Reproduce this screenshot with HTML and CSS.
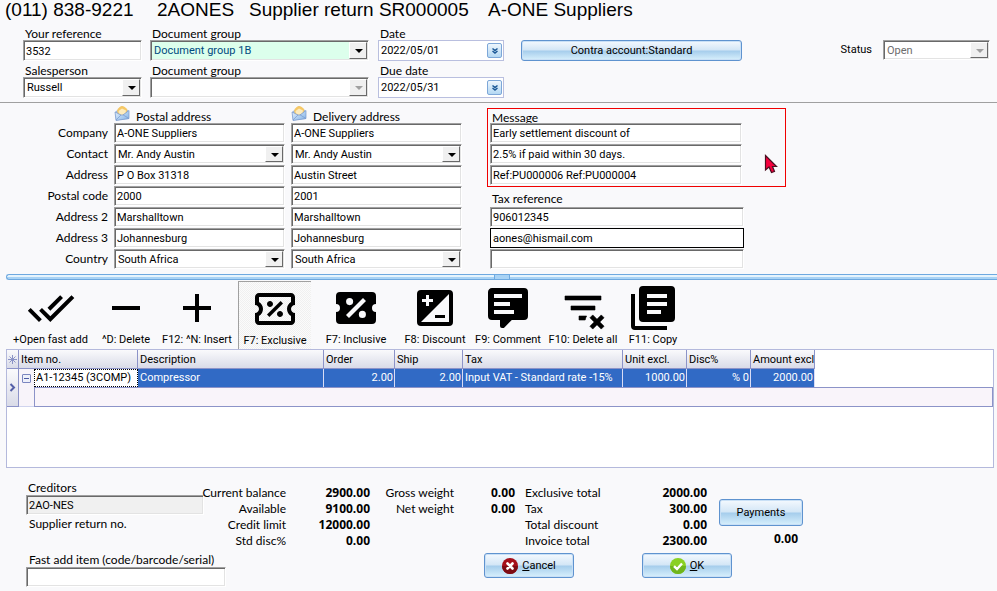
FILE: index.html
```html
<!DOCTYPE html>
<html lang="en">
<head>
<meta charset="utf-8">
<title>Supplier return SR000005</title>
<link rel="stylesheet" href="styles.css">
</head>
<body>
<svg class="defs" aria-hidden="true">
  <defs>
    <linearGradient id="env" x1="0" y1="0" x2="1" y2="1"><stop offset="0" stop-color="#eaf4fd"/><stop offset="1" stop-color="#7fb0e6"/></linearGradient>
    <symbol id="envelope" viewBox="0 0 16 16">
      <path d="M1 7L8 1L15 6V14L2 15.500Z" fill="#9db9e0"/>
      <path d="M3 5.500C5 2 6.500 1 8 1S12 2.500 13.500 5L12 8L8 10L4 9Z" fill="#f6c866"/>
      <path d="M4.500 6L8 3.500L12 5.500L11.500 8L8 10L5 8.500Z" fill="#fdebbd"/>
      <path d="M1 7L7 10L9 10L15 5.500V13.500L2 15.500Z" fill="url(#env)" stroke="#7898cc" stroke-width=".7"/>
      <path d="M2 15L7 10M15 13.500L9 9.800" stroke="#7898cc" stroke-width=".7" fill="none"/>
    </symbol>
  </defs>
</svg>

<header class="title">
  <span class="phone">(011) 838-9221</span>
  <span class="code">2AONES</span>
  <span class="doc">Supplier return SR000005</span>
  <span>A-ONE Suppliers</span>
</header>

<section class="head-form">
  <div class="col col-ref">
    <div class="group"><label for="ref">Your reference</label><input class="field" id="ref" type="text" value="3532"></div>
    <div class="group"><label for="sales">Salesperson</label><span class="combo"><select class="field" id="sales"><option>Russell</option></select></span></div>
  </div>
  <div class="col col-group">
    <div class="group"><label for="dg1">Document group</label><span class="combo"><select class="field mint" id="dg1"><option>Document group 1B</option></select></span></div>
    <div class="group"><label for="dg2">Document group</label><span class="combo off"><select class="field" id="dg2"><option></option></select></span></div>
  </div>
  <div class="col col-date">
    <div class="group"><label for="date">Date</label><span class="date"><input id="date" type="text" value="2022/05/01"><button type="button" aria-label="Choose date"><svg viewBox="0 0 8 8"><path d="M1.500 1.500L4 3.500L6.500 1.500M1.500 4L4 6L6.500 4" /></svg></button></span></div>
    <div class="group"><label for="due">Due date</label><span class="date"><input id="due" type="text" value="2022/05/31"><button type="button" aria-label="Choose due date"><svg viewBox="0 0 8 8"><path d="M1.500 1.500L4 3.500L6.500 1.500M1.500 4L4 6L6.500 4" /></svg></button></span></div>
  </div>
  <button class="btn contra" type="button">Contra account:Standard</button>
  <div class="status"><label for="status">Status</label><span class="combo off"><select class="field" id="status" disabled><option>Open</option></select></span></div>
</section>

<section class="addresses">
  <div class="stack names">
    <label for="p1">Company</label><label for="p2">Contact</label><label for="p3">Address</label><label for="p4">Postal code</label><label for="p5">Address 2</label><label for="p6">Address 3</label><label for="p7">Country</label>
  </div>
  <div class="stack address">
    <h2><svg><use href="#envelope"/></svg>Postal address</h2>
    <input class="field" id="p1" type="text" value="A-ONE Suppliers">
    <span class="combo"><select class="field" id="p2"><option>Mr. Andy Austin</option></select></span>
    <input class="field" id="p3" type="text" value="P O Box 31318">
    <input class="field" id="p4" type="text" value="2000">
    <input class="field" id="p5" type="text" value="Marshalltown">
    <input class="field" id="p6" type="text" value="Johannesburg">
    <span class="combo"><select class="field" id="p7"><option>South Africa</option></select></span>
  </div>
  <div class="stack address">
    <h2><svg><use href="#envelope"/></svg>Delivery address</h2>
    <input class="field" aria-label="Delivery company" type="text" value="A-ONE Suppliers">
    <span class="combo"><select class="field" aria-label="Delivery contact"><option>Mr. Andy Austin</option></select></span>
    <input class="field" aria-label="Delivery address" type="text" value="Austin Street">
    <input class="field" aria-label="Delivery postal code" type="text" value="2001">
    <input class="field" aria-label="Delivery address 2" type="text" value="Marshalltown">
    <input class="field" aria-label="Delivery address 3" type="text" value="Johannesburg">
    <span class="combo"><select class="field" aria-label="Delivery country"><option>South Africa</option></select></span>
  </div>
  <div class="notes">
    <div class="message">
      <label for="m1">Message</label>
      <div class="stack">
        <input class="field" id="m1" type="text" value="Early settlement discount of">
        <input class="field" aria-label="Message line 2" type="text" value="2.5% if paid within 30 days.">
        <input class="field" aria-label="Message line 3" type="text" value="Ref:PU000006 Ref:PU000004">
      </div>
      <svg class="pointer" viewBox="0 0 14 20"><path d="M1.500 1.500V16L5 13L7.500 18.500L10.500 17.500L8.500 12.500H12.500Z" fill="#f5003d" stroke="#4a1020" stroke-width="1.200"/></svg>
    </div>
    <div class="tax">
      <label for="t1">Tax reference</label>
      <div class="stack">
        <input class="field" id="t1" type="text" value="906012345">
        <input class="field focus" aria-label="Email" type="text" value="aones@hismail.com">
        <input class="field" aria-label="Extra reference" type="text">
      </div>
    </div>
  </div>
</section>

<div class="splitter"><span></span></div>

<nav class="toolbar">
  <button type="button"><svg viewBox="0 0 24 24"><path d="M18 7l-1.410-1.410-6.340 6.340 1.410 1.410L18 7zm4.240-1.410L11.660 16.170 7.480 12l-1.410 1.410L11.660 19l12-12-1.420-1.410zM.41 13.410L6 19l1.410-1.410L1.830 12 .41 13.410z"/></svg>+Open fast add</button>
  <button type="button"><svg viewBox="0 0 24 24"><path d="M5 11h14v2H5z"/></svg>^D: Delete</button>
  <button type="button"><svg viewBox="0 0 24 24"><path d="M5 11h6V5h2v6h6v2h-6v6h-2v-6H5z"/></svg>F12: ^N: Insert</button>
  <button type="button" class="pressed"><svg viewBox="0 0 24 24"><path d="M14.800 8L16 9.200L9.200 16L8 14.800L14.800 8M4 4H20C21.110 4 22 4.890 22 6V10C20.900 10 20 10.900 20 12C20 13.100 20.900 14 22 14V18C22 19.110 21.110 20 20 20H4C2.900 20 2 19.110 2 18V14C3.100 14 4 13.100 4 12C4 10.900 3.100 10 2 10V6C2 4.900 2.900 4 4 4M4 6V8.540C5.240 9.260 6 10.570 6 12C6 13.430 5.240 14.750 4 15.460V18H20V15.460C18.760 14.740 18 13.430 18 12C18 10.570 18.760 9.250 20 8.540V6H4M9.500 8C10.330 8 11 8.670 11 9.500S10.330 11 9.500 11 8 10.330 8 9.500 8.670 8 9.500 8M14.500 13C15.330 13 16 13.670 16 14.500S15.330 16 14.500 16 13 15.330 13 14.500 13.670 13 14.500 13Z"/></svg>F7: Exclusive</button>
  <button type="button"><svg viewBox="0 0 24 24"><path d="M4 4A2 2 0 0 0 2 6V10A2 2 0 0 1 4 12A2 2 0 0 1 2 14V18A2 2 0 0 0 4 20H20A2 2 0 0 0 22 18V14A2 2 0 0 1 20 12A2 2 0 0 1 22 10V6A2 2 0 0 0 20 4H4M15.500 7L17 8.500L8.500 17L7 15.500L15.500 7M8.810 7.040A1.770 1.770 0 0 1 8.810 10.580A1.770 1.770 0 0 1 8.810 7.040M15.190 13.420A1.770 1.770 0 0 1 15.190 16.960A1.770 1.770 0 0 1 15.190 13.420Z"/></svg>F7: Inclusive</button>
  <button type="button"><svg viewBox="0 0 24 24"><path d="M5 3H19A2 2 0 0 1 21 5V19A2 2 0 0 1 19 21H5A2 2 0 0 1 3 19V5A2 2 0 0 1 5 3M19 5L5 19H19V5M5.500 7.500V9H7.500V11H9V9H11V7.500H9V5.500H7.500V7.500H5.500M12 15.500H17V17H12V15.500Z"/></svg>F8: Discount</button>
  <button type="button"><svg viewBox="0 0 24 24"><path d="M9 22A1 1 0 0 1 8 21V18H4A2 2 0 0 1 2 16V4C2 2.890 2.900 2 4 2H20A2 2 0 0 1 22 4V16A2 2 0 0 1 20 18H13.900L10.200 21.710C10 21.900 9.750 22 9.500 22H9M5 5V7H19V5H5M5 9V11H13V9H5M5 13V15H15V13H5Z"/></svg>F9: Comment</button>
  <button type="button"><svg viewBox="0 0 24 24"><path d="M21 8H3V6H21V8M13.810 16H10V18H13.090C13.210 17.280 13.460 16.610 13.810 16M18 11H6V13H18V11M21.120 15.460L19 17.590L16.880 15.460L15.470 16.880L17.590 19L15.470 21.120L16.880 22.540L19 20.410L21.120 22.540L22.540 21.120L20.410 19L22.540 16.880L21.120 15.460Z" stroke="#000" stroke-width=".3"/></svg>F10: Delete all</button>
  <button type="button"><svg viewBox="0 0 24 24"><path d="M7 1H21A2 2 0 0 1 23 3V17A2 2 0 0 1 21 19H7A2 2 0 0 1 5 17V3A2 2 0 0 1 7 1M9 5V7H19V5H9M9 9V11H19V9H9M9 13V15H16V13H9M1 5H3V21H19V23H3A2 2 0 0 1 1 21V5Z"/></svg>F11: Copy</button>
</nav>

<main class="grid">
  <table>
    <colgroup><col class="c-ind"><col class="c-exp"><col class="c-item"><col class="c-desc"><col class="c-order"><col class="c-ship"><col class="c-tax"><col class="c-unit"><col class="c-disc"><col class="c-amt"><col></colgroup>
    <thead>
      <tr><th class="ind"><svg viewBox="0 0 9 9"><path d="M4.500 0V9M0 4.500H9M1.500 1.500L7.500 7.500M7.500 1.500L1.500 7.500"/></svg></th><th colspan="2">Item no.</th><th>Description</th><th>Order</th><th>Ship</th><th>Tax</th><th>Unit excl.</th><th>Disc%</th><th>Amount excl</th><td class="rest"></td></tr>
    </thead>
    <tbody>
      <tr class="selected"><th class="ind now" rowspan="2"><svg viewBox="0 0 9 9"><path d="M2.500 1L6 4.500L2.500 8"/></svg></th><td class="exp"><button type="button" aria-label="Collapse row"></button></td><td class="item">A1-12345 (3COMP)</td><td>Compressor</td><td class="num">2.00</td><td class="num">2.00</td><td>Input VAT - Standard rate -15%</td><td class="num">1000.00</td><td class="num">% 0</td><td class="num">2000.00</td><td class="rest"></td></tr>
      <tr class="detail"><td class="exp"></td><td class="sub" colspan="9"></td></tr>
    </tbody>
  </table>
</main>

<footer>
  <div class="summary">
    <div class="creditor">
      <label for="cred">Creditors</label>
      <input class="field gray" id="cred" type="text" value="2AO-NES" readonly>
      <span class="return-no">Supplier return no.</span>
    </div>
    <dl class="balances"><dt>Current balance</dt><dd>2900.00</dd><dt>Available</dt><dd>9100.00</dd><dt>Credit limit</dt><dd>12000.00</dd><dt>Std disc%</dt><dd>0.00</dd></dl>
    <dl class="weights"><dt>Gross weight</dt><dd>0.00</dd><dt>Net weight</dt><dd>0.00</dd></dl>
    <dl class="totals"><dt>Exclusive total</dt><dd>2000.00</dd><dt>Tax</dt><dd>300.00</dd><dt>Total discount</dt><dd>0.00</dd><dt>Invoice total</dt><dd>2300.00</dd></dl>
    <div class="pay"><button class="btn" type="button">Payments</button><b>0.00</b></div>
  </div>
  <div class="actions">
    <div class="fast"><label for="fast">Fast add item (code/barcode/serial)</label><input class="field" id="fast" type="text"></div>
    <button class="btn" type="button"><svg viewBox="0 0 16 16"><circle cx="8" cy="8" r="8" fill="#a5101b"/><path d="M0 8a8 8 0 0 0 16 0Z" fill="#7d0c14"/><path d="M5.500 5.500L10.500 10.500M10.500 5.500L5.500 10.500" stroke="#fff" stroke-width="2.600" stroke-linecap="round"/></svg><span><u>C</u>ancel</span></button>
    <button class="btn" type="button"><svg viewBox="0 0 16 16"><circle cx="8" cy="8" r="8" fill="#8ad023"/><path d="M0 8a8 8 0 0 0 16 0Z" fill="#6fb51c"/><path d="M4 8.200L7 11L12 5.500" fill="none" stroke="#fff" stroke-width="2.400"/></svg><span><u>O</u>K</span></button>
  </div>
</footer>
</body>
</html>
```

FILE: styles.css
```css
* { box-sizing: border-box; }

body {
  margin: 0;
  background: #f9f9fb;
  color: #000;
  font: 12px/14px Lato, "Open Sans", sans-serif;
}

input, select, button { margin: 0; font: 11px/14px Roboto, "Liberation Sans", sans-serif; color: #000; }
label { display: block; white-space: nowrap; }
.defs { position: absolute; width: 0; height: 0; }

.title {
  display: flex;
  height: 26px;
  padding: 0 5px;
  font: 19px/20px "Liberation Sans", sans-serif;
  white-space: nowrap;
}
.phone { width: 152px; }
.code { width: 92px; }
.doc { width: 239px; }

/* Sunken fields and drop-downs */
.field {
  display: block;
  width: 100%;
  height: 20px;
  padding: 1px 2px 0;
  border: 1px solid;
  border-color: #a0a0a0 #fff #fff #a0a0a0;
  border-radius: 0;
  background: #fff;
  box-shadow: inset 1px 1px #696969, inset -1px -1px #e3e3e3;
  outline: 0;
}
select.field { appearance: none; padding-left: 3px; opacity: 1; }
select:disabled { color: #6d6d6d; }
.mint { background: #dcffec; color: #004a80; }
.gray { background: #f0f0f0; }
.focus { border: 1px solid #000; box-shadow: none; }

.combo { position: relative; display: block; }
.combo::before {
  content: "";
  position: absolute;
  top: 2px;
  right: 2px;
  bottom: 2px;
  width: 16px;
  border: 1px solid;
  border-color: #fff #696969 #696969 #fff;
  background: #f0f0f0;
  pointer-events: none;
}
.combo::after {
  content: "";
  position: absolute;
  top: 9px;
  right: 6px;
  border: 4px solid transparent;
  border-top-color: #000;
  border-bottom: 0;
  pointer-events: none;
}
.combo.off::after { border-top-color: #a0a0a0; }

.btn {
  display: flex;
  align-items: center;
  justify-content: center;
  gap: 4px;
  padding: 0;
  border: 1px solid #5f93cf;
  border-radius: 3px;
  background: linear-gradient(#f4f9fe, #d3e6f6 48%, #a5cdec 52%, #d8f0fc);
  box-shadow: inset 0 0 0 1px #c9e0f6;
}
.btn svg { width: 16px; height: 16px; }

/* Document header */
.head-form {
  display: flex;
  padding: 0 7px 4px 23px;
  border-bottom: 1px solid #a0a0a0;
}
.col { display: flex; flex-direction: column; gap: 2px; }
.col .field { height: 21px; }
.col label { height: 14px; padding-left: 2px; line-height: 16px; }
.col-ref { width: 119px; margin-right: 8px; }
.col-group { width: 219px; margin-right: 9px; }
.col-date { width: 126px; margin-right: 17px; }
.date {
  display: flex;
  align-items: center;
  height: 21px;
  padding: 0 1px 0 2px;
  border: 1px solid #b9bfdf;
  background: #fff;
}
.date input { flex: 1; min-width: 0; padding: 0; border: 0; background: none; outline: 0; }
.date button {
  display: grid;
  place-items: center;
  width: 15px;
  height: 15px;
  padding: 0;
  border: 1px solid #7da7d8;
  border-radius: 2px;
  background: linear-gradient(#eef6fd, #b4d8f3);
}
.date svg { width: 8px; height: 8px; fill: none; stroke: #1c5896; stroke-width: 1.5; }
.contra { width: 221px; height: 21px; margin-top: 14px; }
.status { display: flex; align-items: center; gap: 11px; height: 20px; margin: 14px 0 0 auto; font: 11px/14px Roboto, sans-serif; }
.status .combo { width: 107px; }

/* Addresses and notes */
.addresses { display: flex; align-items: flex-end; height: 166px; }
.stack { display: grid; grid-auto-rows: 20px; row-gap: 1px; }
.names { width: 108px; margin-right: 6px; text-align: right; }
.names label { line-height: 20px; }
.address { width: 171px; margin-right: 6px; }
.address h2 { display: flex; align-items: flex-end; gap: 6px; height: 20px; margin: 0 0 -1px; font: inherit; line-height: 10px; }
.address h2 svg { width: 16px; height: 16px; margin-bottom: 1px; }
.notes { width: 299px; margin-left: 19px; }
.message { position: relative; padding: 0 43px 1px 2px; border: 1px solid #f00000; }
.message label, .tax label { padding-left: 2px; }
.message label { height: 14px; line-height: 18px; }
.message .stack { position: relative; }
.tax { padding: 5px 42px 0 3px; }
.tax label { height: 15px; }
.pointer { position: absolute; top: 45px; right: 7px; width: 14px; height: 20px; }

.splitter {
  display: flex;
  justify-content: center;
  height: 6px;
  margin: 5px 0 1px 6px;
  border: 1px solid #6ea9e0;
  border-right: 0;
  border-radius: 3px 0 0 3px;
  background: linear-gradient(#e6f4fd 50%, #a9d3f5 50%);
}
.splitter span { width: 16px; border: solid #6ea9e0; border-width: 0 1px; background: #a9d3f5; }

.toolbar {
  display: grid;
  grid-template-columns: 79px 72px 70px 85px 78px 80px 66px 84px 56px;
  justify-items: center;
  height: 68px;
  padding-left: 11px;
}
.toolbar button {
  display: flex;
  flex-direction: column;
  align-items: center;
  width: 100%;
  padding: 3px 0 0;
  border: 0;
  background: none;
  white-space: nowrap;
}
.toolbar svg { width: 48px; height: 48px; flex: none; margin-bottom: 1px; fill-rule: evenodd; }
.toolbar .pressed {
  width: 73px;
  border: solid #a0a0a0;
  border-width: 1px 0 0 1px;
  background: repeating-conic-gradient(#f0f0f0 0 25%, #fbfbfb 0 50%) 0 0 / 2px 2px;
}

/* Line items */
.grid { min-height: 119px; margin: 0 3px 0 6px; border: 1px solid #b4b9dc; background: #fff; }
table { width: 100%; table-layout: fixed; border-collapse: separate; border-spacing: 0; font: 11px/14px Roboto, sans-serif; }
.c-ind { width: 12px; }
.c-exp { width: 15px; }
.c-item { width: 104px; }
.c-desc { width: 186px; }
.c-order { width: 71px; }
.c-ship { width: 68px; }
.c-tax { width: 160px; }
.c-unit { width: 64px; }
.c-disc { width: 64px; }
.c-amt { width: 64px; }
th, td { height: 18px; padding: 0 2px; text-align: left; font-weight: 400; white-space: nowrap; overflow: hidden; }
th { height: 19px; border: solid #8c93c8; border-width: 0 1px 1px 0; background: linear-gradient(#fafafc, #d9dbe8); }
thead th { padding: 1px 1px 0 2px; }
thead .ind, .ind { padding: 0; text-align: center; }
.ind svg { display: block; width: 9px; height: 9px; margin: auto; fill: none; stroke: #8a93c6; }
.now svg { stroke: #5560a8; stroke-width: 2; }
.selected td { border: solid #d9dcf5; border-width: 0 1px 0 0; background: #316ac5; color: #fff; }
.selected .item { border: 1px dotted #000; background: #fff; color: #000; padding: 0 1px; }
.selected .rest { border: 0; background: #fff; }
.selected .exp, .exp { padding: 0; border: 0; background: #f8f4fa; }
.exp button { position: relative; display: block; width: 9px; height: 9px; margin: auto; padding: 0; border: 1px solid #7b86c0; border-radius: 1px; background: #eef0fa; }
.exp button::after { content: ""; position: absolute; inset: 3px 1px; background: #4d5aa5; }
.selected .num, .num { padding: 0 1px; text-align: right; }
.detail td { height: 20px; }
.detail .exp { border-bottom: 1px solid #d0d4ee; }
.sub { border: 1px solid #8c93c8; background: #f9f4fa; }

/* Totals and actions */
footer { padding: 13px 26px 0; }
.summary { display: flex; height: 72px; }
.creditor { width: 178px; }
.creditor label { padding-left: 2px; }
.return-no { display: block; padding: 2px 0 0 3px; }
dl { display: grid; grid-auto-rows: 16px; align-content: start; margin: 5px 0 0; white-space: nowrap; }
dd, .pay b { margin: 0; text-align: right; font-family: "Open Sans", sans-serif; font-weight: 700; }
.balances { grid-template-columns: 84px 84px; margin-left: -2px; }
.weights { grid-template-columns: 84px 61px; }
.balances dt, .weights dt { text-align: right; }
.totals { grid-template-columns: 100px 82px; margin-left: 10px; }
.pay { display: flex; flex-direction: column; width: 84px; margin: 18px 0 0 12px; }
.pay .btn { height: 27px; }
.pay b { margin: 6px 5px 0 0; }
.actions { display: flex; }
.fast { width: 200px; margin-right: 258px; }
.fast label { padding-left: 3px; }
.actions .btn { width: 90px; height: 25px; margin-right: 68px; }
```
